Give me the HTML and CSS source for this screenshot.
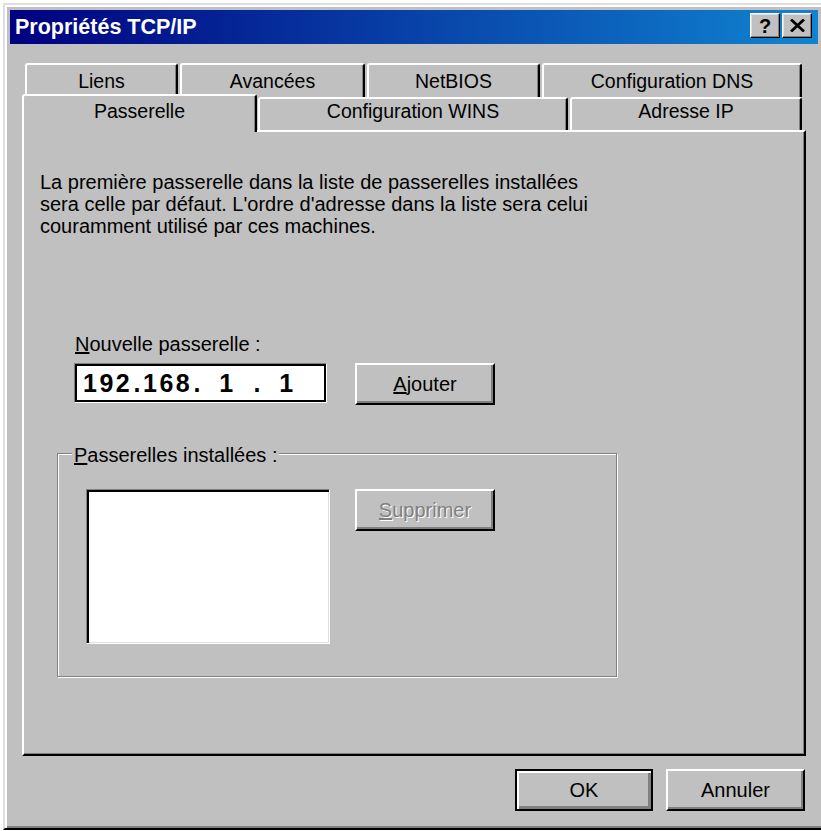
FILE: index.html
```html
<!DOCTYPE html>
<html lang="fr">
<head>
<meta charset="utf-8">
<title>Propriétés TCP/IP</title>
<link rel="stylesheet" href="styles.css">
</head>
<body>
<div class="window">
  <div class="titlebar">
    <span class="title">Propriétés TCP/IP</span>
    <div class="title-buttons">
      <span class="tbtn help">?</span>
      <span class="tbtn close">
        <svg width="15" height="13" viewBox="0 0 15 13"><path d="M1 0.5 L14 12.5 M14 0.5 L1 12.5" stroke="#000" stroke-width="2.8" fill="none"/></svg>
      </span>
    </div>
  </div>

  <div class="tabs">
    <div class="tabrow back">
      <div class="tab t-liens">Liens</div>
      <div class="tab t-avancees">Avancées</div>
      <div class="tab t-netbios">NetBIOS</div>
      <div class="tab t-dns">Configuration DNS</div>
    </div>
    <div class="tabrow front">
      <div class="tab selected t-passerelle">Passerelle</div>
      <div class="tab t-wins">Configuration WINS</div>
      <div class="tab t-ip">Adresse IP</div>
    </div>
  </div>

  <div class="panel">
    <p class="desc">La première passerelle dans la liste de passerelles installées<br>sera celle par défaut. L'ordre d'adresse dans la liste sera celui<br>couramment utilisé par ces machines.</p>

    <div class="field-label"><u>N</u>ouvelle passerelle :</div>
    <div class="ip-row">
      <div class="ip-box">
        <span class="oct">192</span><span class="dot">.</span><span class="oct">168</span><span class="dot">.</span><span class="oct">1</span><span class="dot">.</span><span class="oct">1</span>
      </div>
      <button class="btn add"><span><u>A</u>jouter</span></button>
    </div>

    <div class="group">
      <div class="group-label"><u>P</u>asserelles installées :</div>
      <div class="group-row">
        <div class="listbox"></div>
        <button class="btn remove disabled"><span><u>S</u>upprimer</span></button>
      </div>
    </div>
  </div>

  <div class="actions">
    <button class="btn default ok">OK</button>
    <button class="btn cancel">Annuler</button>
  </div>
</div>
</body>
</html>
```

FILE: styles.css
```css
html, body {
  margin: 0;
  padding: 0;
  height: 100%;
  overflow: hidden;
  background: #ffffff;
}

body {
  font-family: "Liberation Sans", Arial, sans-serif;
  font-size: 20px;
  color: #000;
  padding-top: 3px;
  box-sizing: border-box;
}

.window {
  box-sizing: border-box;
  width: 822px;
  height: 827px;
  margin-left: 3px;
  background: #c0c0c0;
  border: 2px solid;
  border-color: #dfdfdf #000 #000 #dfdfdf;
  box-shadow: inset 2px 2px #fff, inset -2px -2px #808080;
  padding: 5px;
  display: flex;
  flex-direction: column;
}

/* Title bar */
.titlebar {
  box-sizing: border-box;
  height: 34px;
  flex: none;
  background: linear-gradient(to right, #000080, #1084d0);
  display: flex;
  justify-content: space-between;
  align-items: center;
  padding: 0 6px 0 5px;
}

.title {
  color: #fff;
  font-weight: bold;
  font-size: 21.5px;
  line-height: 24px;
}

.title-buttons {
  display: flex;
  gap: 2px;
  align-self: flex-start;
  margin-top: 3px;
}

.tbtn {
  box-sizing: border-box;
  width: 30px;
  height: 25px;
  background: #c0c0c0;
  border: 1px solid;
  border-color: #fff #000 #000 #fff;
  box-shadow: inset -1px -1px #808080, inset 1px 1px #dfdfdf;
  display: flex;
  align-items: center;
  justify-content: center;
  font-weight: bold;
  font-size: 20px;
  line-height: 20px;
}

.tbtn svg { display: block; }

/* Tabs */
.tabs {
  margin-top: 19px;
  flex: none;
}

.tabrow {
  display: flex;
}

.tabrow.back {
  margin-left: 15px;
  height: 34px;
  gap: 2px;
}

.tabrow.front {
  margin-left: 12px;
  height: 33px;
  align-items: flex-start;
}

.tab {
  box-sizing: border-box;
  height: 100%;
  background: #c0c0c0;
  border-top: 2px solid #fff;
  border-left: 2px solid #fff;
  border-right: 2px solid #000;
  border-radius: 3px 3px 0 0;
  box-shadow: inset -1px 0 #808080;
  text-align: center;
  font-size: 19.5px;
  line-height: 22px;
  white-space: nowrap;
}

.tabrow.back .tab { padding-top: 5px; }
.tabrow.front .tab { padding-top: 1px; }

.t-liens { width: 153px; }
.t-avancees { width: 185px; }
.t-netbios { width: 173px; }
.t-dns { width: 260px; }

.t-passerelle { width: 235px; }
.t-wins { width: 310px; margin-left: 1px; }
.t-ip { width: 232px; margin-left: 2px; }

.tab.selected {
  height: 38px;
  margin-top: -3px;
  padding-top: 4px !important;
  position: relative;
  z-index: 2;
}

/* Panel */
.panel {
  box-sizing: border-box;
  flex: none;
  margin-left: 12px;
  width: 784px;
  height: 626px;
  border: 2px solid;
  border-color: #fff #000 #000 #fff;
  box-shadow: inset -1px -1px #808080;
  padding: 39px 0 0 16px;
}

.desc {
  margin: 0;
  line-height: 22px;
  white-space: nowrap;
}

.field-label {
  margin-top: 96px;
  margin-left: 35px;
  line-height: 22px;
}

.ip-row {
  display: flex;
  align-items: flex-start;
  margin-top: 8px;
  margin-left: 34px;
}

.ip-box {
  box-sizing: border-box;
  width: 253px;
  height: 40px;
  background: #fff;
  border: 1px solid;
  border-color: #808080 #fff #fff #808080;
  box-shadow: inset 2px 2px #000, inset -2px -2px #000;
  display: flex;
  align-items: center;
  padding-left: 7px;
  font-weight: bold;
  font-size: 25px;
}

.oct {
  flex: none;
  width: 50px;
  text-align: center;
  letter-spacing: 2.5px;
  padding-left: 1px;
  box-sizing: border-box;
  white-space: nowrap;
}

.dot {
  flex: none;
  width: 10px;
  text-align: center;
}

/* Buttons */
.btn {
  box-sizing: border-box;
  width: 140px;
  height: 42px;
  padding: 0;
  margin: 0;
  background: #c0c0c0;
  font-family: inherit;
  font-size: 20px;
  color: #000;
  border: 2px solid;
  border-color: #fff #000 #000 #fff;
  box-shadow: inset -2px -2px #808080;
  display: flex;
  align-items: center;
  justify-content: center;
}

.btn.add {
  margin-left: 28px;
}

.btn.disabled {
  color: #808080;
  text-shadow: 1px 1px #fff;
}

.btn.default {
  border-color: #000;
  box-shadow: inset 2px 2px #fff, inset -3px -3px #808080;
}

.btn.ok { width: 138px; }
.btn.cancel { width: 139px; }

/* Group box */
.group {
  box-sizing: border-box;
  width: 560px;
  height: 224px;
  margin-top: 48px;
  margin-left: 17px;
  border: 1px solid #808080;
  box-shadow: inset 1px 1px #fff, 1px 1px #fff;
}

.group-label {
  width: fit-content;
  margin-top: -10px;
  margin-left: 14px;
  padding: 0 2px;
  background: #c0c0c0;
  line-height: 22px;
}

.group-row {
  display: flex;
  align-items: flex-start;
  margin-top: 23px;
  margin-left: 28px;
}

.listbox {
  box-sizing: border-box;
  width: 244px;
  height: 155px;
  background: #fff;
  border: 1px solid;
  border-color: #808080 #fff #fff #808080;
  box-shadow: inset 2px 2px #000, inset -1px -1px #dfdfdf;
}

.btn.remove {
  margin-left: 25px;
}

/* Dialog buttons */
.actions {
  display: flex;
  justify-content: flex-end;
  gap: 13px;
  margin-top: 13px;
  padding-right: 13px;
}
```
